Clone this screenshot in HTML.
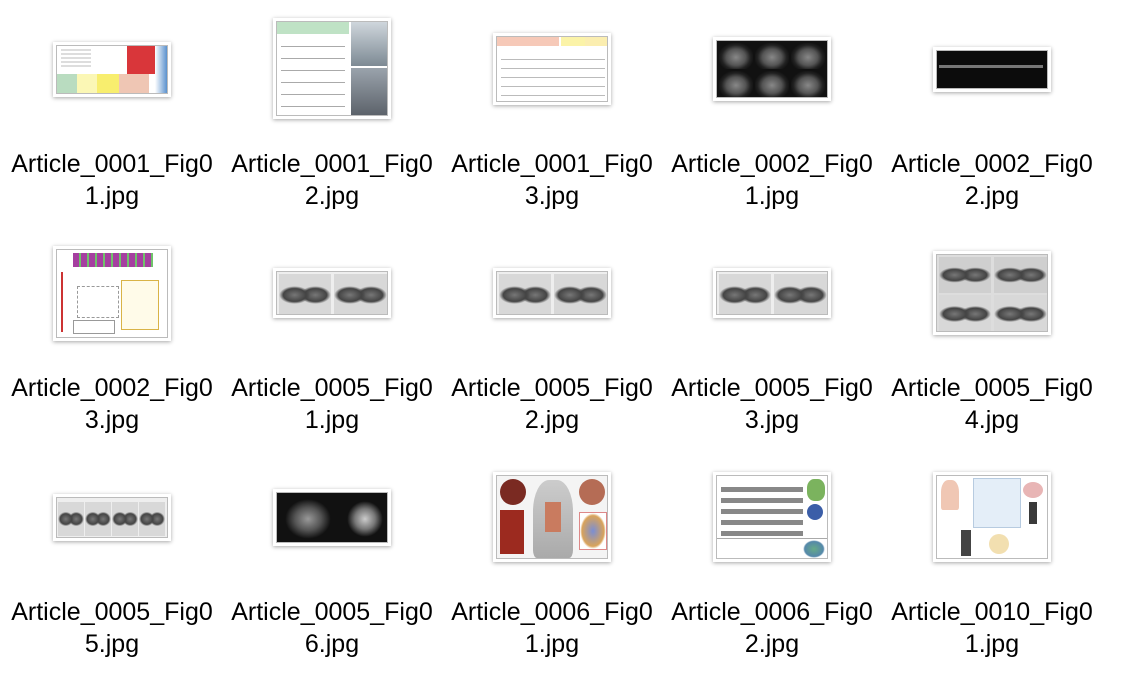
<!DOCTYPE html>
<html><head><meta charset="utf-8"><style>
html,body{margin:0;padding:0;background:#fff;width:1140px;height:682px;overflow:hidden;position:relative;font-family:"Helvetica Neue","Liberation Sans",Arial,sans-serif}
.t{position:absolute;background:#fff;box-shadow:0 1px 4px rgba(0,0,0,.35);box-sizing:border-box;padding:3px;overflow:hidden}
.in{position:relative;width:100%;height:100%;overflow:hidden;border:1px solid #bbb;box-sizing:border-box;background:#fff}
.l{position:absolute;width:220px;text-align:center;font-size:25px;line-height:32px;color:#000}
.a{position:absolute}
.ct{position:absolute;background:radial-gradient(ellipse at 50% 55%,#888 0,#555 40%,#222 60%,#111 75%);border-radius:2px}
.ctl{position:absolute;background:radial-gradient(ellipse at 30% 50%,#777 0,#444 22%,transparent 30%),radial-gradient(ellipse at 70% 50%,#777 0,#444 22%,transparent 30%),#d8d8d8}
</style></head><body>

<div class="t" style="left:53px;top:42px;width:118px;height:55px"><div class="in">
<div class="a" style="left:0;top:28px;width:20px;height:20px;background:#b9dcc0"></div>
<div class="a" style="left:20px;top:28px;width:20px;height:20px;background:#fbf7b5"></div>
<div class="a" style="left:40px;top:28px;width:22px;height:20px;background:#f8ee6e"></div>
<div class="a" style="left:62px;top:28px;width:30px;height:20px;background:#efc6b4"></div>
<div class="a" style="left:70px;top:0;width:28px;height:28px;background:#d9363a"></div>
<div class="a" style="left:98px;top:0;width:14px;height:48px;background:linear-gradient(90deg,#fff,#3f7fc6)"></div>
<div class="a" style="left:4px;top:3px;width:30px;height:20px;background:repeating-linear-gradient(#ddd 0 2px,#fff 2px 4px)"></div>
</div></div>
<div class="t" style="left:273px;top:18px;width:118px;height:101px"><div class="in">
<div class="a" style="left:0;top:0;width:72px;height:12px;background:#bfe2c5"></div>
<div class="a" style="left:4px;top:16px;width:64px;height:76px;background:repeating-linear-gradient(#fff 0 8px,#aaa 8px 9px,#fff 9px 12px)"></div>
<div class="a" style="left:74px;top:0;width:38px;height:44px;background:linear-gradient(#cfd6dc,#7d8a94)"></div>
<div class="a" style="left:74px;top:46px;width:38px;height:49px;background:linear-gradient(#9aa3ac,#5a6068)"></div>
</div></div>
<div class="t" style="left:493px;top:33px;width:118px;height:72px"><div class="in">
<div class="a" style="left:0;top:0;width:62px;height:9px;background:#f6c9b8"></div>
<div class="a" style="left:64px;top:0;width:24px;height:9px;background:#fbf3a8"></div>
<div class="a" style="left:88px;top:0;width:24px;height:9px;background:#fbeeb0"></div>
<div class="a" style="left:4px;top:14px;width:104px;height:50px;background:repeating-linear-gradient(#fff 0 8px,#bbb 8px 9px)"></div>
</div></div>
<div class="t" style="left:713px;top:37px;width:118px;height:64px"><div class="in" style="background:#111">
<div class="ct" style="left:2px;top:2px;width:34px;height:26px"></div>
<div class="ct" style="left:38px;top:2px;width:34px;height:26px"></div>
<div class="ct" style="left:74px;top:2px;width:34px;height:26px"></div>
<div class="ct" style="left:2px;top:30px;width:34px;height:26px"></div>
<div class="ct" style="left:38px;top:30px;width:34px;height:26px"></div>
<div class="ct" style="left:74px;top:30px;width:34px;height:26px"></div>
</div></div>
<div class="t" style="left:933px;top:47px;width:118px;height:45px"><div class="in" style="background:#0c0c0c">
<div class="a" style="left:2px;top:14px;width:104px;height:3px;background:#777"></div>
</div></div>

<div class="t" style="left:53px;top:246px;width:118px;height:95px"><div class="in">
<div class="a" style="left:16px;top:3px;width:80px;height:14px;background:repeating-linear-gradient(90deg,#a53fa0 0 6px,#6fc36b 6px 8px)"></div>
<div class="a" style="left:4px;top:22px;width:2px;height:60px;background:#c33"></div>
<div class="a" style="left:20px;top:36px;width:40px;height:30px;border:1px dashed #999"></div>
<div class="a" style="left:64px;top:30px;width:36px;height:48px;border:1px solid #d9b347;background:#fffbe9"></div>
<div class="a" style="left:16px;top:70px;width:40px;height:12px;border:1px solid #999"></div>
</div></div>
<div class="t" style="left:273px;top:268px;width:118px;height:50px"><div class="in" style="background:#eee">
<div class="ctl" style="left:2px;top:2px;width:52px;height:42px"></div>
<div class="ctl" style="left:57px;top:2px;width:53px;height:42px"></div>
</div></div>
<div class="t" style="left:493px;top:268px;width:118px;height:50px"><div class="in" style="background:#eee">
<div class="ctl" style="left:2px;top:2px;width:52px;height:42px"></div>
<div class="ctl" style="left:57px;top:2px;width:53px;height:42px"></div>
</div></div>
<div class="t" style="left:713px;top:268px;width:118px;height:50px"><div class="in" style="background:#eee">
<div class="ctl" style="left:2px;top:2px;width:52px;height:42px"></div>
<div class="ctl" style="left:57px;top:2px;width:53px;height:42px"></div>
</div></div>
<div class="t" style="left:933px;top:251px;width:118px;height:84px"><div class="in" style="background:#ddd">
<div class="ctl" style="left:2px;top:2px;width:52px;height:36px;background-color:#cfcfcf"></div>
<div class="ctl" style="left:57px;top:2px;width:53px;height:36px;background-color:#cfcfcf"></div>
<div class="ctl" style="left:2px;top:40px;width:52px;height:38px"></div>
<div class="ctl" style="left:57px;top:40px;width:53px;height:38px"></div>
</div></div>

<div class="t" style="left:53px;top:494px;width:118px;height:47px"><div class="in" style="background:#eee">
<div class="ctl" style="left:1px;top:4px;width:26px;height:34px"></div>
<div class="ctl" style="left:28px;top:4px;width:26px;height:34px"></div>
<div class="ctl" style="left:55px;top:4px;width:26px;height:34px"></div>
<div class="ctl" style="left:82px;top:4px;width:26px;height:34px"></div>
</div></div>
<div class="t" style="left:273px;top:489px;width:118px;height:57px"><div class="in" style="background:#111">
<div class="a" style="left:8px;top:6px;width:46px;height:40px;border-radius:50%;background:radial-gradient(#999 0,#555 40%,#111 70%)"></div>
<div class="a" style="left:70px;top:8px;width:36px;height:36px;border-radius:50%;background:radial-gradient(#ccc 0,#777 40%,#111 70%)"></div>
</div></div>
<div class="t" style="left:493px;top:472px;width:118px;height:90px"><div class="in" style="background:#f4f4f4">
<div class="a" style="left:3px;top:3px;width:26px;height:26px;border-radius:50%;background:#7a2a22"></div>
<div class="a" style="left:3px;top:34px;width:24px;height:44px;background:#9c2a1f"></div>
<div class="a" style="left:36px;top:4px;width:40px;height:78px;border-radius:40% 40% 10% 10%;background:linear-gradient(#ccc,#aaa)"></div>
<div class="a" style="left:48px;top:26px;width:16px;height:30px;background:#c97b5f"></div>
<div class="a" style="left:82px;top:3px;width:26px;height:26px;border-radius:50%;background:#b56c55"></div>
<div class="a" style="left:82px;top:36px;width:26px;height:36px;border:1px solid #d88;background:radial-gradient(#7a8ed4,#d9a35a 60%,#fff 70%)"></div>
</div></div>
<div class="t" style="left:713px;top:472px;width:118px;height:90px"><div class="in">
<div class="a" style="left:4px;top:8px;width:82px;height:52px;background:repeating-linear-gradient(#fff 0 3px,#888 3px 8px,#fff 8px 11px)"></div>
<div class="a" style="left:90px;top:3px;width:18px;height:22px;background:#7bb35e;border-radius:40%"></div>
<div class="a" style="left:90px;top:28px;width:16px;height:16px;background:#3b5ea8;border-radius:50%"></div>
<div class="a" style="left:0;top:62px;width:112px;height:1px;background:#aaa"></div>
<div class="a" style="left:86px;top:64px;width:22px;height:18px;background:radial-gradient(#6a8,#58a 60%,transparent 70%)"></div>
</div></div>
<div class="t" style="left:933px;top:472px;width:118px;height:90px"><div class="in">
<div class="a" style="left:4px;top:4px;width:18px;height:30px;background:#f0c7b4;border-radius:40% 40% 10% 10%"></div>
<div class="a" style="left:36px;top:2px;width:46px;height:48px;background:#e4eef8;border:1px solid #b7cbe0"></div>
<div class="a" style="left:86px;top:6px;width:20px;height:16px;background:#e8b5b5;border-radius:50%"></div>
<div class="a" style="left:92px;top:26px;width:8px;height:22px;background:#3a3a3a"></div>
<div class="a" style="left:24px;top:54px;width:10px;height:26px;background:#444"></div>
<div class="a" style="left:52px;top:58px;width:20px;height:20px;border-radius:50%;background:#f2dfb0"></div>
</div></div>

<div class="l" style="left:2px;top:148px">Article_0001_Fig0<br>1.jpg</div>
<div class="l" style="left:222px;top:148px">Article_0001_Fig0<br>2.jpg</div>
<div class="l" style="left:442px;top:148px">Article_0001_Fig0<br>3.jpg</div>
<div class="l" style="left:662px;top:148px">Article_0002_Fig0<br>1.jpg</div>
<div class="l" style="left:882px;top:148px">Article_0002_Fig0<br>2.jpg</div>

<div class="l" style="left:2px;top:372px">Article_0002_Fig0<br>3.jpg</div>
<div class="l" style="left:222px;top:372px">Article_0005_Fig0<br>1.jpg</div>
<div class="l" style="left:442px;top:372px">Article_0005_Fig0<br>2.jpg</div>
<div class="l" style="left:662px;top:372px">Article_0005_Fig0<br>3.jpg</div>
<div class="l" style="left:882px;top:372px">Article_0005_Fig0<br>4.jpg</div>

<div class="l" style="left:2px;top:596px">Article_0005_Fig0<br>5.jpg</div>
<div class="l" style="left:222px;top:596px">Article_0005_Fig0<br>6.jpg</div>
<div class="l" style="left:442px;top:596px">Article_0006_Fig0<br>1.jpg</div>
<div class="l" style="left:662px;top:596px">Article_0006_Fig0<br>2.jpg</div>
<div class="l" style="left:882px;top:596px">Article_0010_Fig0<br>1.jpg</div>
</body></html>
